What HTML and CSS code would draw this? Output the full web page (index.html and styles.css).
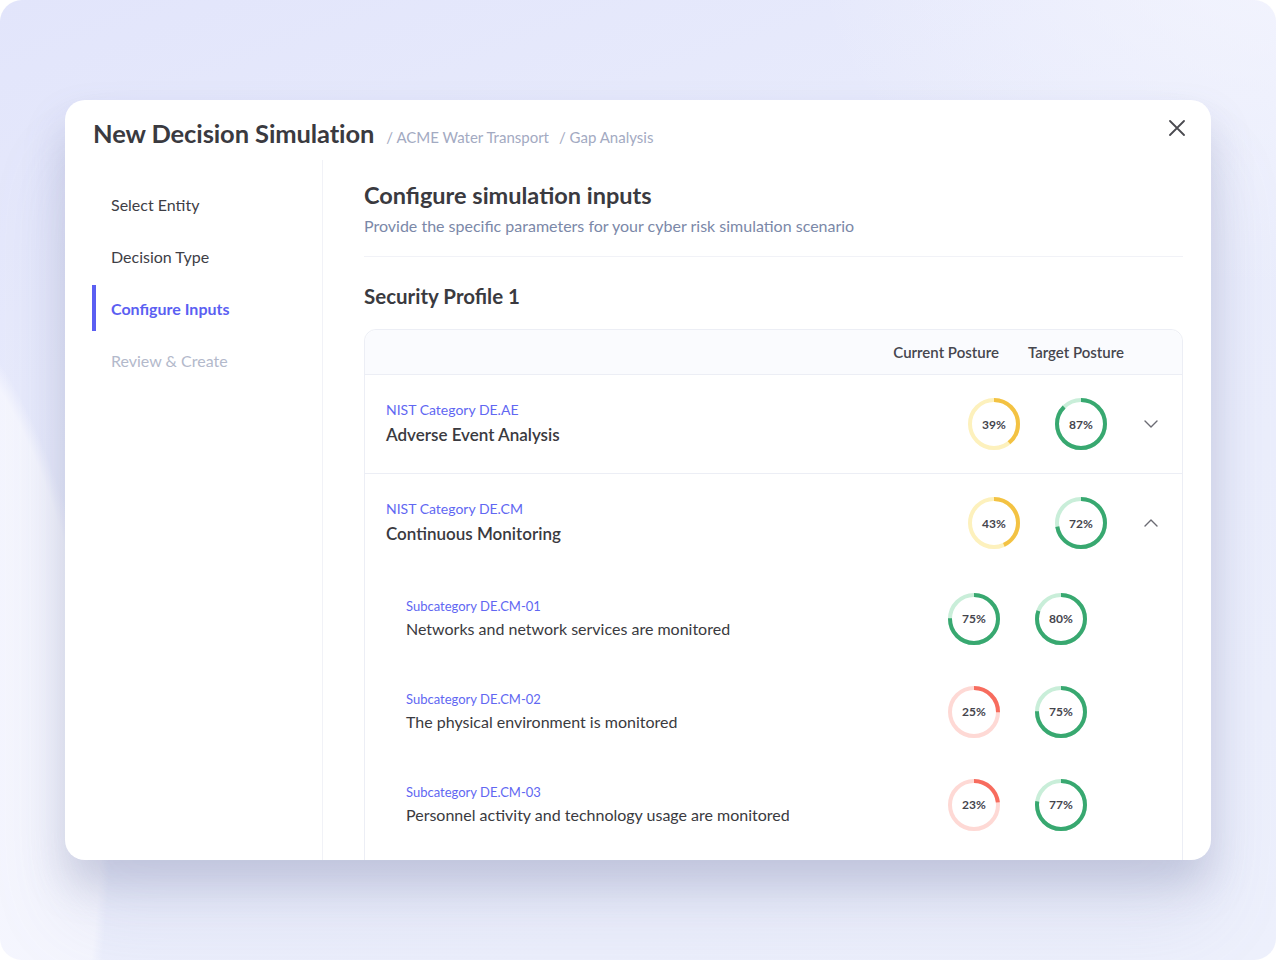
FILE: index.html
```html
<!DOCTYPE html>
<html lang="en">
<head>
  <meta charset="UTF-8">
  <title>New Decision Simulation</title>
  <link rel="stylesheet" href="styles.css">
</head>
<body>
  <div class="frame">
    <div class="modal">
      <div class="modal-header">
        <h1>New Decision Simulation</h1>
        <span class="crumb">/ ACME Water Transport</span>
        <span class="crumb">/ Gap Analysis</span>
        <button class="close" aria-label="Close">
          <svg width="16" height="16" viewBox="0 0 16 16"><path d="M1 1 L15 15 M15 1 L1 15" stroke="#4a4a50" stroke-width="1.8" stroke-linecap="round"/></svg>
        </button>
      </div>

      <div class="modal-body">
        <nav class="steps">
          <div class="step">Select Entity</div>
          <div class="step">Decision Type</div>
          <div class="step active">Configure Inputs</div>
          <div class="step muted">Review &amp; Create</div>
        </nav>

        <main class="content">
          <h2>Configure simulation inputs</h2>
          <p class="lead">Provide the specific parameters for your cyber risk simulation scenario</p>
          <hr>
          <h3>Security Profile 1</h3>

          <div class="table">
            <div class="table-head">
              <span>Current Posture</span>
              <span>Target Posture</span>
            </div>
            <div id="rows"></div>
          </div>
        </main>
      </div>
    </div>
  </div>

  <script>
    const rows = [
      {code: 'NIST Category DE.AE', name: 'Adverse Event Analysis', cur: 39, tgt: 87, open: false},
      {code: 'NIST Category DE.CM', name: 'Continuous Monitoring', cur: 43, tgt: 72, open: true, subs: [
        {code: 'Subcategory DE.CM-01', name: 'Networks and network services are monitored', cur: 75, tgt: 80},
        {code: 'Subcategory DE.CM-02', name: 'The physical environment is monitored', cur: 25, tgt: 75},
        {code: 'Subcategory DE.CM-03', name: 'Personnel activity and technology usage are monitored', cur: 23, tgt: 77}
      ]}
    ];

    function tone(v) {
      if (v < 35) return 'red';
      if (v < 60) return 'yellow';
      return 'green';
    }

    function ring(v) {
      const c = 2 * Math.PI * 24;
      const dash = (v / 100 * c).toFixed(1);
      return `
        <div class="ring ${tone(v)}">
          <svg width="52" height="52" viewBox="0 0 52 52">
            <circle class="track" cx="26" cy="26" r="24"/>
            <circle class="bar" cx="26" cy="26" r="24" stroke-dasharray="${dash} ${c.toFixed(1)}" transform="rotate(-90 26 26)"/>
          </svg>
          <span>${v}%</span>
        </div>`;
    }

    const chevDown = '<svg width="14" height="8" viewBox="0 0 14 8"><path d="M1 1 L7 7 L13 1" fill="none" stroke="#6b6b73" stroke-width="1.4" stroke-linecap="round" stroke-linejoin="round"/></svg>';
    const chevUp = '<svg width="14" height="8" viewBox="0 0 14 8"><path d="M1 7 L7 1 L13 7" fill="none" stroke="#6b6b73" stroke-width="1.4" stroke-linecap="round" stroke-linejoin="round"/></svg>';

    const box = document.getElementById('rows');
    rows.forEach(r => {
      const cat = document.createElement('div');
      cat.className = 'category';
      let html = `
        <div class="row">
          <div class="label">
            <div class="code">${r.code}</div>
            <div class="name">${r.name}</div>
          </div>
          <div class="rings">${ring(r.cur)}${ring(r.tgt)}</div>
          <div class="toggle">${r.open ? chevUp : chevDown}</div>
        </div>`;
      if (r.open && r.subs) {
        html += '<div class="subs">';
        r.subs.forEach(s => {
          html += `
            <div class="sub">
              <div class="label">
                <div class="code">${s.code}</div>
                <div class="name">${s.name}</div>
              </div>
              <div class="rings">${ring(s.cur)}${ring(s.tgt)}</div>
            </div>`;
        });
        html += '</div>';
      }
      cat.innerHTML = html;
      box.appendChild(cat);
    });
  </script>
</body>
</html>
```

FILE: styles.css
```css
* {
  box-sizing: border-box;
}
body {
  margin: 0;
  background: #ffffff;
  font-family: 'Lato', 'Noto Sans', sans-serif;
  color: #3a3a42;
}
.frame {
  width: 1276px;
  height: 960px;
  border-radius: 22px;
  overflow: hidden;
  padding: 100px 65px 0 65px;
  background:
    radial-gradient(ellipse 260px 560px at -150px 820px, rgba(245, 246, 254, 0.95) 0%, rgba(245, 246, 254, 0.95) 96%, rgba(245, 246, 254, 0) 100%),
    radial-gradient(ellipse 700px 500px at 1300px -60px, rgba(245, 246, 254, 0.9), rgba(245, 246, 254, 0) 70%),
    linear-gradient(160deg, #e2e5fb 0%, #eaedfc 45%, #edf0fc 100%);
}
.modal {
  height: 760px;
  background: #ffffff;
  border-radius: 20px;
  overflow: hidden;
  display: flex;
  flex-direction: column;
  box-shadow: 0 24px 40px rgba(110, 118, 160, 0.28), 0 60px 80px rgba(130, 140, 180, 0.12);
}
.modal-header {
  display: flex;
  align-items: baseline;
  padding: 18px 26px 0 28px;
  height: 60px;
}
.modal-header h1 {
  margin: 0 12px 0 0;
  font-size: 25.5px;
  font-weight: 700;
  color: #3a3a40;
  letter-spacing: -0.1px;
}
.crumb {
  font-size: 15px;
  color: #a3aac2;
  margin-right: 10px;
}
.close {
  margin-left: auto;
  border: none;
  background: none;
  padding: 0;
  cursor: pointer;
  align-self: flex-start;
  margin-top: 2px;
}
.close svg {
  display: block;
}
.modal-body {
  flex: 1;
  display: flex;
  min-height: 0;
}
.steps {
  width: 258px;
  flex: none;
  border-right: 1px solid #f1f2f7;
  padding: 21px 0 0 27px;
  display: flex;
  flex-direction: column;
  gap: 6px;
}
.step {
  height: 46px;
  display: flex;
  align-items: center;
  padding-left: 15px;
  font-size: 16px;
  color: #3e3e46;
  border-left: 4px solid transparent;
}
.step.active {
  border-left-color: #5b5ff2;
  color: #5b5ff2;
  font-weight: 700;
}
.step.muted {
  color: #b3b9cb;
}
.content {
  flex: 1;
  padding: 20px 28px 0 41px;
  overflow: hidden;
}
.content h2 {
  margin: 0;
  font-size: 23.5px;
  font-weight: 700;
  color: #3a3a40;
  line-height: 30px;
}
.lead {
  margin: 4px 0 0;
  font-size: 16px;
  color: #7b88a8;
  line-height: 24px;
}
.content hr {
  border: none;
  border-top: 1px solid #f1f2f7;
  margin: 18px 0 0;
}
.content h3 {
  margin: 26px 0 0;
  font-size: 20.5px;
  font-weight: 700;
  color: #3a3a40;
  line-height: 26px;
}
.table {
  margin-top: 20px;
  border: 1px solid #eceef5;
  border-radius: 12px;
  padding-bottom: 60px;
}
.table-head {
  height: 45px;
  background: #fafbfe;
  border-bottom: 1px solid #eceef5;
  border-radius: 12px 12px 0 0;
  display: flex;
  align-items: center;
  justify-content: flex-end;
  padding-right: 58px;
  gap: 29px;
  font-size: 15px;
  font-weight: 600;
  color: #46464e;
}
.category + .category {
  border-top: 1px solid #eceef5;
}
.row {
  height: 98px;
  display: flex;
  align-items: center;
  padding: 0 24px 0 21px;
}
.label {
  flex: 1;
}
.code {
  font-size: 14px;
  color: #6167f2;
  line-height: 20px;
}
.name {
  font-size: 17px;
  font-weight: 600;
  color: #3a3a40;
  line-height: 26px;
  margin-top: 2px;
}
.rings {
  display: flex;
  gap: 35px;
}
.toggle {
  width: 51px;
  display: flex;
  justify-content: flex-end;
}
.subs {
  padding: 0 0 0 41px;
}
.sub {
  height: 93px;
  display: flex;
  align-items: center;
  padding-right: 95px;
}
.sub .code {
  font-size: 13px;
}
.sub .name {
  font-size: 16px;
  font-weight: 400;
  margin-top: 0;
}
.ring {
  position: relative;
  width: 52px;
  height: 52px;
}
.ring svg {
  display: block;
}
.ring circle {
  fill: none;
  stroke-width: 4;
}
.ring span {
  position: absolute;
  inset: 0;
  display: flex;
  align-items: center;
  justify-content: center;
  font-size: 12px;
  font-weight: 700;
  color: #45454d;
}
.ring.yellow .track { stroke: #fdf1bd; }
.ring.yellow .bar { stroke: #f3c243; }
.ring.green .track { stroke: #c9eed9; }
.ring.green .bar { stroke: #38a870; }
.ring.red .track { stroke: #fed9d5; }
.ring.red .bar { stroke: #f76c5e; }
```
